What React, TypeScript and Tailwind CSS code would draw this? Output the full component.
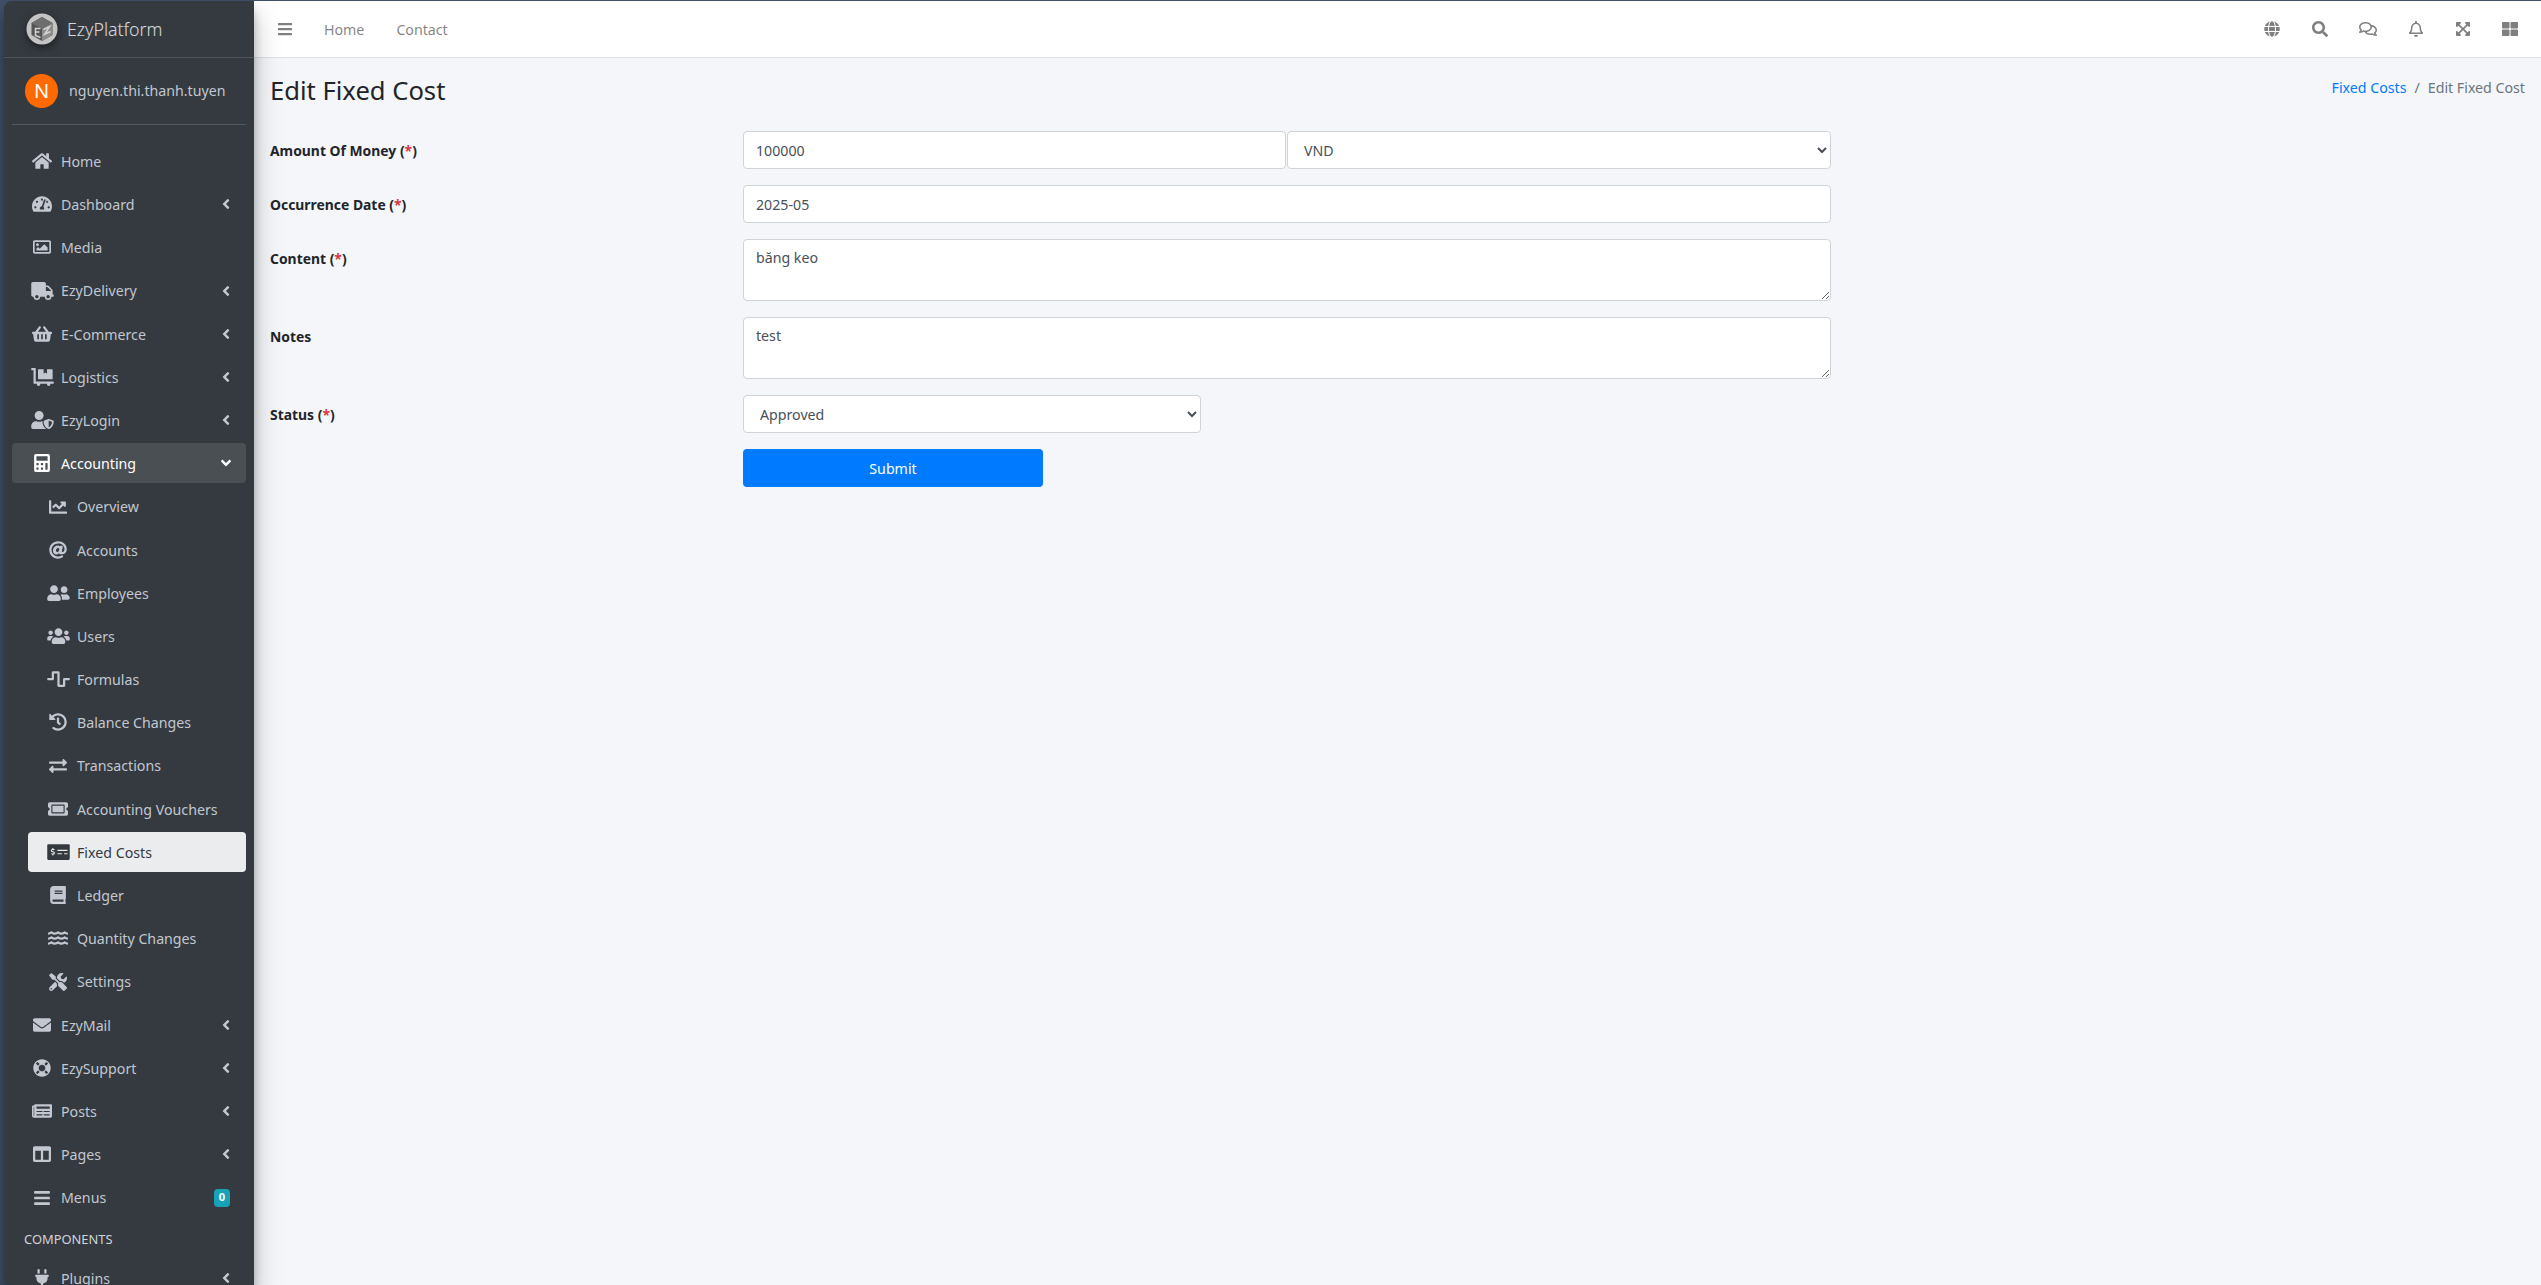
import {
  FaAngleDown,
  FaAngleLeft,
  FaAt,
  FaBars,
  FaBook,
  FaCalculator,
  FaColumns,
  FaDollyFlatbed,
  FaEnvelope,
  FaExchangeAlt,
  FaExpandArrowsAlt,
  FaGlobe,
  FaHistory,
  FaHome,
  FaLifeRing,
  FaMoneyCheckAlt,
  FaNewspaper,
  FaPlug,
  FaRegBell,
  FaRegComments,
  FaRegImage,
  FaSearch,
  FaShoppingBasket,
  FaTachometerAlt,
  FaThLarge,
  FaTicketAlt,
  FaTools,
  FaTruck,
  FaUserFriends,
  FaUserShield,
  FaUsers,
  FaChartLine,
  FaWater,
  FaWaveSquare,
} from 'react-icons/fa';
import type { IconType } from 'react-icons';

interface NavEntry {
  label: string;
  icon: IconType;
  // react-icons draws a 1em square, so wide glyphs need their own width
  iconW: string;
  arrow?: boolean;
  badge?: string;
}

const topItems: NavEntry[] = [
  { label: 'Home', icon: FaHome, iconW: 'w-[20px]' },
  { label: 'Dashboard', icon: FaTachometerAlt, iconW: 'w-[20px]', arrow: true },
  { label: 'Media', icon: FaRegImage, iconW: 'w-[18px]' },
  { label: 'EzyDelivery', icon: FaTruck, iconW: 'w-[23px]', arrow: true },
  { label: 'E-Commerce', icon: FaShoppingBasket, iconW: 'w-[20px]', arrow: true },
  { label: 'Logistics', icon: FaDollyFlatbed, iconW: 'w-[23px]', arrow: true },
  { label: 'EzyLogin', icon: FaUserShield, iconW: 'w-[23px]', arrow: true },
];

const accountingItems: NavEntry[] = [
  { label: 'Overview', icon: FaChartLine, iconW: 'w-[18px]' },
  { label: 'Accounts', icon: FaAt, iconW: 'w-[18px]' },
  { label: 'Employees', icon: FaUserFriends, iconW: 'w-[23px]' },
  { label: 'Users', icon: FaUsers, iconW: 'w-[23px]' },
  { label: 'Formulas', icon: FaWaveSquare, iconW: 'w-[23px]' },
  { label: 'Balance Changes', icon: FaHistory, iconW: 'w-[18px]' },
  { label: 'Transactions', icon: FaExchangeAlt, iconW: 'w-[18px]' },
  { label: 'Accounting Vouchers', icon: FaTicketAlt, iconW: 'w-[20px]' },
  { label: 'Fixed Costs', icon: FaMoneyCheckAlt, iconW: 'w-[23px]' },
  { label: 'Ledger', icon: FaBook, iconW: 'w-[16px]' },
  { label: 'Quantity Changes', icon: FaWater, iconW: 'w-[20px]' },
  { label: 'Settings', icon: FaTools, iconW: 'w-[18px]' },
];

const bottomItems: NavEntry[] = [
  { label: 'EzyMail', icon: FaEnvelope, iconW: 'w-[18px]', arrow: true },
  { label: 'EzySupport', icon: FaLifeRing, iconW: 'w-[18px]', arrow: true },
  { label: 'Posts', icon: FaNewspaper, iconW: 'w-[20px]', arrow: true },
  { label: 'Pages', icon: FaColumns, iconW: 'w-[18px]', arrow: true },
  { label: 'Menus', icon: FaBars, iconW: 'w-[16px]', badge: '0' },
];

const headerIcons: { icon: IconType; box: string; iconW: string }[] = [
  { icon: FaGlobe, box: 'w-[48px]', iconW: 'w-[16px]' },
  { icon: FaSearch, box: 'w-[48px]', iconW: 'w-[16px]' },
  { icon: FaRegComments, box: 'w-[48px]', iconW: 'w-[18px]' },
  { icon: FaRegBell, box: 'w-[48px]', iconW: 'w-[14px]' },
  { icon: FaExpandArrowsAlt, box: 'w-[46px]', iconW: 'w-[14px]' },
  { icon: FaThLarge, box: 'w-[47px]', iconW: 'w-[16px]' },
];

function NavRow({ item, state }: { item: NavEntry; state?: 'open' | 'active' }) {
  const Icon = item.icon;
  const color =
    state === 'active'
      ? 'bg-[#ebeced] text-[#343a40]'
      : state === 'open'
        ? 'bg-[#4a4f54] text-white'
        : 'text-[#c2c7d0]';
  return (
    <li className={`mb-[3.2px] flex h-10 items-center rounded px-4 ${color}`}>
      <span className="mr-[5px] flex w-7 shrink-0 justify-center">
        <Icon className={`h-[18px] ${item.iconW}`} />
      </span>
      <span className="pt-px whitespace-nowrap">{item.label}</span>
      {item.arrow && <FaAngleLeft className="ml-auto h-4 w-2" />}
      {state === 'open' && <FaAngleDown className="mr-[-1px] ml-auto h-4 w-[10px]" />}
      {item.badge && (
        <span className="ml-auto flex h-[18px] w-4 items-center justify-center rounded bg-[#17a2b8] text-[11px] font-bold text-white">
          {item.badge}
        </span>
      )}
    </li>
  );
}

function Sidebar() {
  return (
    <aside className="relative z-10 h-[1284px] w-[250px] shrink-0 overflow-hidden rounded-l-lg bg-[#343a40] shadow-[0_14px_28px_rgba(0,0,0,0.25),0_10px_10px_rgba(0,0,0,0.22)]">
      <div className="flex h-[57px] items-center border-b border-[#4b545c] pl-[22px]">
        <svg viewBox="0 0 32 32" className="h-8 w-8 shrink-0 drop-shadow-[0_3px_4px_rgba(0,0,0,0.5)]">
          <circle cx="16" cy="16" r="15.5" fill="#c4c4c4" />
          <path d="M16 4l10.5 6v12L16 28 5.5 22V10z" fill="#555" />
          <path d="M5.5 10L16 4l10.5 6L16 16z" fill="#6e6e6e" />
          <path d="M16 16l10.5-6v12L16 28z" fill="#8c8c8c" />
          <path d="M14.5 15.5H9.5v7l5 2M9.5 19h4M17.5 16.5l6-3-5 8 6-3" fill="none" stroke="#d2d2d2" strokeWidth="1.5" />
        </svg>
        <span className="ml-[9px] text-[17.8px] font-light text-white/80">EzyPlatform</span>
      </div>

      <div className="mx-2 flex h-[67px] items-center border-b border-[#4f5962] pb-[1px] pl-[13px]">
        <div className="flex h-[34px] w-[33px] items-center justify-center rounded-full bg-[#ff6a00] text-[20px] text-white">
          N
        </div>
        <span className="ml-[11px] pt-px whitespace-nowrap text-[#c2c7d0]">nguyen.thi.thanh.tuyen</span>
      </div>

      <nav className="mt-4 px-2">
        <ul>
          {topItems.map((item) => (
            <NavRow key={item.label} item={item} />
          ))}
          <NavRow item={{ label: 'Accounting', icon: FaCalculator, iconW: 'w-[16px]' }} state="open" />
          <li>
            <ul className="pl-4">
              {accountingItems.map((item) => (
                <NavRow
                  key={item.label}
                  item={item}
                  state={item.label === 'Fixed Costs' ? 'active' : undefined}
                />
              ))}
            </ul>
          </li>
          {bottomItems.map((item) => (
            <NavRow key={item.label} item={item} />
          ))}
          <li className="py-2 pl-3 text-[12.9px] leading-[21.6px] text-[#d0d4db]">COMPONENTS</li>
          <NavRow item={{ label: 'Plugins', icon: FaPlug, iconW: 'w-[14px]', arrow: true }} />
        </ul>
      </nav>
    </aside>
  );
}

function Header() {
  return (
    <header className="flex h-[57px] shrink-0 items-center border-b border-[#dee2e6] bg-white pr-[8px] pl-[24px] text-black/50">
      <FaBars className="h-4 w-[14px]" />
      <a className="ml-[32px] pt-px">Home</a>
      <a className="ml-[32px] pt-px">Contact</a>
      <div className="ml-auto flex items-center">
        {headerIcons.map(({ icon: Icon, box, iconW }, i) => (
          <span key={i} className={`flex justify-center ${box}`}>
            <Icon className={`h-4 ${iconW}`} />
          </span>
        ))}
      </div>
    </header>
  );
}

function Required() {
  return (
    <>
      {' ('}
      <span className="text-[#dc3545]">*</span>
      {')'}
    </>
  );
}

const fieldClass =
  'h-[38px] rounded border border-[#ced4da] bg-white px-3 text-[#495057] outline-none';
const areaClass =
  'block h-[62px] w-full rounded border border-[#ced4da] bg-white px-3 py-[7px] text-[#495057] outline-none';

function FormRow({ label, required, children }: { label: string; required?: boolean; children: React.ReactNode }) {
  return (
    <div className="mb-4 flex">
      <label className="w-[473px] shrink-0 pt-[8px] text-[13.9px] leading-6 font-bold text-[#212529]">
        {label}
        {required && <Required />}
      </label>
      <div className="w-[1088px]">{children}</div>
    </div>
  );
}

function EditForm() {
  return (
    <form>
      <FormRow label="Amount Of Money" required>
        <div className="flex gap-px">
          <input defaultValue="100000" className={`${fieldClass} w-[543px]`} />
          <select defaultValue="VND" className={`${fieldClass} w-[544px]`}>
            <option value="VND">VND</option>
            <option value="USD">USD</option>
          </select>
        </div>
      </FormRow>
      <FormRow label="Occurrence Date" required>
        <input defaultValue="2025-05" className={`${fieldClass} w-full`} />
      </FormRow>
      <FormRow label="Content" required>
        <textarea defaultValue="băng keo" className={areaClass} />
      </FormRow>
      <FormRow label="Notes">
        <textarea defaultValue="test" className={areaClass} />
      </FormRow>
      <FormRow label="Status" required>
        <select defaultValue="Approved" className={`${fieldClass} w-[458px]`}>
          <option value="Approved">Approved</option>
          <option value="Pending">Pending</option>
        </select>
      </FormRow>
      <div className="flex">
        <div className="w-[473px] shrink-0" />
        <button type="button" className="h-[38px] w-[300px] rounded bg-[#007bff] pt-px text-white">
          Submit
        </button>
      </div>
    </form>
  );
}

export default function App() {
  return (
    <div className="flex h-screen overflow-hidden bg-[#3f5068] pt-px pl-1 font-['Noto_Sans',sans-serif] text-[14.2px]">
      <Sidebar />
      <div className="flex min-w-0 flex-1 flex-col bg-[#f4f6f9]">
        <Header />
        <main className="px-4">
          <div className="flex h-[73px] items-start justify-between">
            <h1 className="mt-[15px] text-[25.6px] leading-[36px] text-[#212529]">Edit Fixed Cost</h1>
            <div className="mt-[18px] leading-6">
              <span className="text-[#007bff]">Fixed Costs</span>
              <span className="px-2 text-[#6c757d]">/</span>
              <span className="text-[#6c757d]">Edit Fixed Cost</span>
            </div>
          </div>
          <EditForm />
        </main>
      </div>
    </div>
  );
}
